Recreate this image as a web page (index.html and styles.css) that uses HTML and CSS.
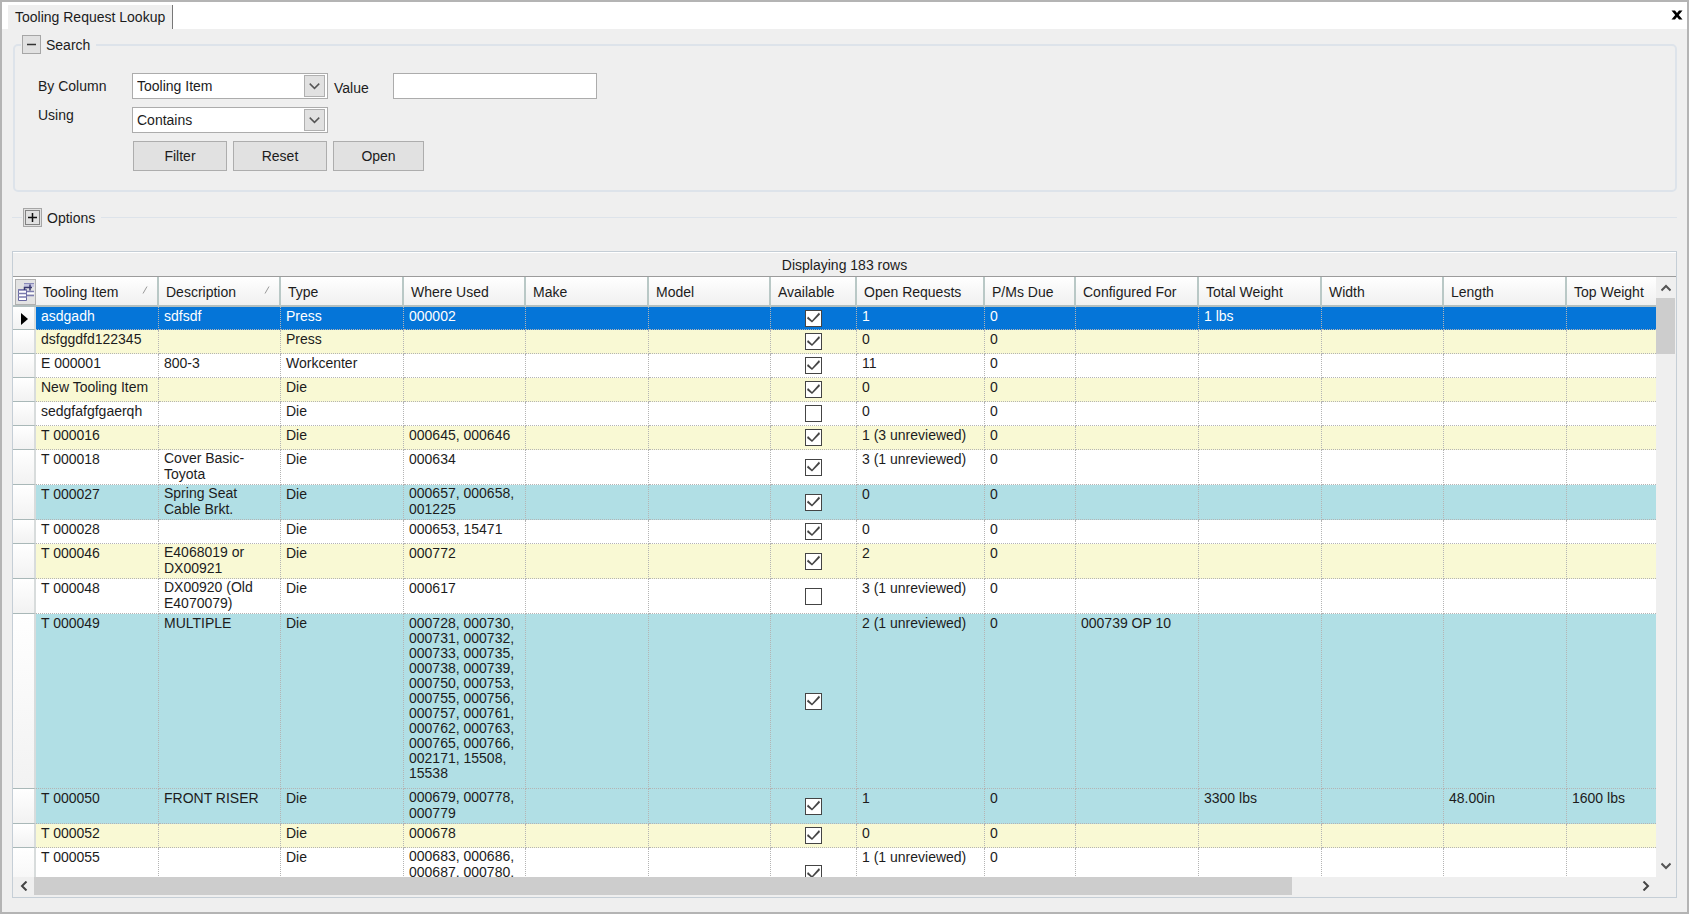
FILE: index.html
```
<!DOCTYPE html>
<html lang="en">
<head>
<meta charset="utf-8">
<title>Tooling Request Lookup</title>
<link rel="stylesheet" href="styles.css">
</head>
<body>
<main class="window">
  <header class="tabs">
    <h1 class="tab">Tooling Request Lookup</h1>
    <button class="close" type="button" aria-label="Close">
      <svg width="12" height="10" viewBox="0 0 12 10"><path d="M0.500 0.500H4L6 3L8 0.500H11.500L7.800 5L11.500 9.500H8L6 7L4 9.500H0.500L4.200 5Z" fill="#000"/></svg>
    </button>
  </header>

  <fieldset class="group">
    <legend class="legend">
      <button class="toggle" type="button" aria-label="Collapse search"><svg width="17" height="17" viewBox="0 0 17 17"><path d="M4 8.500H13" stroke="#333" stroke-width="1.500"/></svg></button>
      <span>Search</span>
    </legend>
    <form class="form">
      <label class="label" for="column">By Column</label>
      <div class="field">
        <span class="combo">
          <select id="column"><option>Tooling Item</option></select>
          <svg class="arrow" viewBox="0 0 20 20"><path d="M5 7.500L10 12.500L15 7.500" fill="none" stroke="#555" stroke-width="1.500"/></svg>
        </span>
        <label class="value-label" for="value">Value</label>
        <input class="text" id="value" type="text">
      </div>
      <label class="label second" for="using">Using</label>
      <div class="field">
        <span class="combo">
          <select id="using"><option>Contains</option></select>
          <svg class="arrow" viewBox="0 0 20 20"><path d="M5 7.500L10 12.500L15 7.500" fill="none" stroke="#555" stroke-width="1.500"/></svg>
        </span>
      </div>
      <div class="actions">
        <button class="button" type="button">Filter</button>
        <button class="button" type="button">Reset</button>
        <button class="button narrow" type="button">Open</button>
      </div>
    </form>
  </fieldset>

  <fieldset class="group collapsed">
    <legend class="legend">
      <button class="toggle" type="button" aria-label="Expand options"><svg width="17" height="17" viewBox="0 0 17 17"><rect x="1.500" y="1.500" width="14" height="14" fill="none" stroke="#222" stroke-dasharray="1 1"/><path d="M4 8.500H13M8.500 4V13" stroke="#111" stroke-width="1.500"/></svg></button>
      <span>Options</span>
    </legend>
  </fieldset>

  <section class="grid">
    <h2 class="caption">Displaying 183 rows</h2>
    <div class="viewport">
      <table class="table">
        <colgroup>
          <col class="c-head"><col class="c-wide"><col class="c-mid"><col class="c-wide"><col class="c-mid"><col class="c-wide"><col class="c-mid"><col class="c-avail"><col class="c-open"><col class="c-due"><col class="c-wide"><col class="c-wide"><col class="c-mid"><col class="c-wide"><col>
        </colgroup>
        <thead>
          <tr>
            <th class="chooser-cell"><button class="chooser" type="button" aria-label="Choose columns"><svg width="18" height="20" viewBox="0 0 18 20"><path d="M7 1H17V5H7Z" fill="#c6c6e0"/><path d="M7 1.500H17" stroke="#8a8ab8"/><path d="M9 9H17V12H9Z" fill="#fff"/><path d="M9 9.500H17M9 13.500H17" stroke="#7c7cae" stroke-width="1.500"/><path d="M1.500 7.500H9.500V18.500H1.500Z" fill="#fff" stroke="#6a6aa2"/><path d="M1 8H10M1 11.500H10M1 15H10" stroke="#7c7cae" stroke-width="1.500"/><path d="M7.500 8V5.500H15M13 2.500V8.500" fill="none" stroke="#3a3a70" stroke-width="1.500"/></svg></button></th>
            <th class="sorted">Tooling Item<svg class="sort" width="6" height="8" viewBox="0 0 6 8"><path d="M1 7.500L5 0.500" stroke="#999"/></svg></th>
            <th class="sorted">Description<svg class="sort" width="6" height="8" viewBox="0 0 6 8"><path d="M1 7.500L5 0.500" stroke="#999"/></svg></th>
            <th>Type</th><th>Where Used</th><th>Make</th><th>Model</th><th>Available</th><th>Open Requests</th><th>P/Ms Due</th><th>Configured For</th><th>Total Weight</th><th>Width</th><th>Length</th><th>Top Weight</th>
          </tr>
        </thead>
        <tbody>
          <tr class="selected"><td class="rowhead"><svg width="7" height="12" viewBox="0 0 7 12"><path d="M0 0L7 6L0 12Z" fill="#000"/></svg></td><td>asdgadh</td><td>sdfsdf</td><td>Press</td><td>000002</td><td></td><td></td><td class="check"><input type="checkbox" checked aria-label="asdgadh available"></td><td>1</td><td>0</td><td></td><td>1 lbs</td><td></td><td></td><td></td></tr>
          <tr class="yellow"><td class="rowhead"></td><td>dsfggdfd122345</td><td></td><td>Press</td><td></td><td></td><td></td><td class="check"><input type="checkbox" checked aria-label="dsfggdfd122345 available"></td><td>0</td><td>0</td><td></td><td></td><td></td><td></td><td></td></tr>
          <tr><td class="rowhead"></td><td>E 000001</td><td>800-3</td><td>Workcenter</td><td></td><td></td><td></td><td class="check"><input type="checkbox" checked aria-label="E 000001 available"></td><td>11</td><td>0</td><td></td><td></td><td></td><td></td><td></td></tr>
          <tr class="yellow"><td class="rowhead"></td><td>New Tooling Item</td><td></td><td>Die</td><td></td><td></td><td></td><td class="check"><input type="checkbox" checked aria-label="New Tooling Item available"></td><td>0</td><td>0</td><td></td><td></td><td></td><td></td><td></td></tr>
          <tr><td class="rowhead"></td><td>sedgfafgfgaerqh</td><td></td><td>Die</td><td></td><td></td><td></td><td class="check"><input type="checkbox" aria-label="sedgfafgfgaerqh available"></td><td>0</td><td>0</td><td></td><td></td><td></td><td></td><td></td></tr>
          <tr class="yellow"><td class="rowhead"></td><td>T 000016</td><td></td><td>Die</td><td>000645, 000646</td><td></td><td></td><td class="check"><input type="checkbox" checked aria-label="T 000016 available"></td><td>1 (3 unreviewed)</td><td>0</td><td></td><td></td><td></td><td></td><td></td></tr>
          <tr class="double"><td class="rowhead"></td><td>T 000018</td><td class="multi">Cover Basic-Toyota</td><td>Die</td><td>000634</td><td></td><td></td><td class="check"><input type="checkbox" checked aria-label="T 000018 available"></td><td>3 (1 unreviewed)</td><td>0</td><td></td><td></td><td></td><td></td><td></td></tr>
          <tr class="blue double"><td class="rowhead"></td><td>T 000027</td><td class="multi">Spring Seat Cable Brkt.</td><td>Die</td><td class="multi">000657, 000658, 001225</td><td></td><td></td><td class="check"><input type="checkbox" checked aria-label="T 000027 available"></td><td>0</td><td>0</td><td></td><td></td><td></td><td></td><td></td></tr>
          <tr><td class="rowhead"></td><td>T 000028</td><td></td><td>Die</td><td>000653, 15471</td><td></td><td></td><td class="check"><input type="checkbox" checked aria-label="T 000028 available"></td><td>0</td><td>0</td><td></td><td></td><td></td><td></td><td></td></tr>
          <tr class="yellow double"><td class="rowhead"></td><td>T 000046</td><td class="multi">E4068019 or DX00921</td><td>Die</td><td>000772</td><td></td><td></td><td class="check"><input type="checkbox" checked aria-label="T 000046 available"></td><td>2</td><td>0</td><td></td><td></td><td></td><td></td><td></td></tr>
          <tr class="double"><td class="rowhead"></td><td>T 000048</td><td class="multi">DX00920 (Old E4070079)</td><td>Die</td><td>000617</td><td></td><td></td><td class="check"><input type="checkbox" aria-label="T 000048 available"></td><td>3 (1 unreviewed)</td><td>0</td><td></td><td></td><td></td><td></td><td></td></tr>
          <tr class="blue tall"><td class="rowhead"></td><td>T 000049</td><td>MULTIPLE</td><td>Die</td><td class="multi">000728, 000730, 000731, 000732, 000733, 000735, 000738, 000739, 000750, 000753, 000755, 000756, 000757, 000761, 000762, 000763, 000765, 000766, 002171, 15508, 15538</td><td></td><td></td><td class="check"><input type="checkbox" checked aria-label="T 000049 available"></td><td>2 (1 unreviewed)</td><td>0</td><td>000739 OP 10</td><td></td><td></td><td></td><td></td></tr>
          <tr class="blue double"><td class="rowhead"></td><td>T 000050</td><td>FRONT RISER</td><td>Die</td><td class="multi">000679, 000778, 000779</td><td></td><td></td><td class="check"><input type="checkbox" checked aria-label="T 000050 available"></td><td>1</td><td>0</td><td></td><td>3300 lbs</td><td></td><td>48.00in</td><td>1600 lbs</td></tr>
          <tr class="yellow"><td class="rowhead"></td><td>T 000052</td><td></td><td>Die</td><td>000678</td><td></td><td></td><td class="check"><input type="checkbox" checked aria-label="T 000052 available"></td><td>0</td><td>0</td><td></td><td></td><td></td><td></td><td></td></tr>
          <tr class="triple"><td class="rowhead"></td><td>T 000055</td><td></td><td>Die</td><td class="multi">000683, 000686, 000687, 000780,</td><td></td><td></td><td class="check"><input type="checkbox" checked aria-label="T 000055 available"></td><td>1 (1 unreviewed)</td><td>0</td><td></td><td></td><td></td><td></td><td></td></tr>
        </tbody>
      </table>
    </div>
    <div class="vscroll">
      <button class="step" type="button" aria-label="Scroll up"><svg width="10" height="8" viewBox="0 0 10 8"><path d="M0.500 6.500L5 2L9.500 6.500" fill="none" stroke="#555" stroke-width="2"/></svg></button>
      <div class="track"><div class="thumb"></div></div>
      <button class="step" type="button" aria-label="Scroll down"><svg width="10" height="8" viewBox="0 0 10 8"><path d="M0.500 1.500L5 6L9.500 1.500" fill="none" stroke="#555" stroke-width="2"/></svg></button>
    </div>
    <div class="hscroll">
      <button class="step" type="button" aria-label="Scroll left"><svg width="8" height="10" viewBox="0 0 8 10"><path d="M6.500 0.500L2 5L6.500 9.500" fill="none" stroke="#444" stroke-width="2"/></svg></button>
      <div class="track"><div class="thumb"></div></div>
      <button class="step" type="button" aria-label="Scroll right"><svg width="8" height="10" viewBox="0 0 8 10"><path d="M1.500 0.500L6 5L1.500 9.500" fill="none" stroke="#444" stroke-width="2"/></svg></button>
    </div>
  </section>
</main>
</body>
</html>
```

FILE: styles.css
```
* {
  box-sizing: border-box;
}

body {
  margin: 0;
  font-family: "Liberation Sans", Arial, sans-serif;
  font-size: 14px;
  line-height: 16px;
  color: #1c1c1c;
}

button,
input,
select {
  font: inherit;
  color: inherit;
  margin: 0;
  border-radius: 0;
}

svg {
  display: block;
}

.window {
  display: flex;
  flex-direction: column;
  height: 100vh;
  background: #efefef;
  border: 2px solid #b4b4b4;
}

.tabs {
  display: flex;
  justify-content: space-between;
  align-items: flex-end;
  height: 27px;
  padding-left: 6px;
  background: #fff;
}

.tab {
  margin: 0;
  height: 24px;
  padding: 4px 7px 0;
  font-size: 14px;
  font-weight: normal;
  background: #efefef;
  border-right: 1px solid #777;
}

.close {
  align-self: center;
  padding: 0;
  margin: 0 4px 2px 0;
  background: none;
  border: 0;
}

.group {
  min-width: 0;
  margin: 6px 10px 0 11px;
  padding: 0;
  border: 2px solid #dde3ea;
  border-radius: 5px;
}

.legend {
  display: flex;
  align-items: center;
  gap: 5px;
  margin-left: 6px;
  padding: 0 6px 0 1px;
}

.toggle {
  width: 19px;
  height: 19px;
  padding: 0;
  background: #e1e1e1;
  border: 1px solid #a6a6a6;
}

.form {
  display: grid;
  grid-template-columns: 94px 1fr;
  gap: 8px 0;
  padding: 19px 0 19px 23px;
}

.label {
  padding-top: 5px;
}

.label.second {
  padding-top: 0;
}

.field {
  display: flex;
}

.combo {
  display: grid;
  width: 196px;
  height: 26px;
}

.combo select {
  grid-area: 1 / 1;
  appearance: none;
  padding: 0 28px 0 4px;
  background: #fff;
  border: 1px solid #acacac;
}

.arrow {
  grid-area: 1 / 1;
  place-self: center end;
  width: 21px;
  height: 22px;
  margin-right: 3px;
  background: #e1e1e1;
  border: 1px solid #b0b0b0;
  pointer-events: none;
}

.value-label {
  width: 65px;
  padding: 7px 0 0 6px;
}

.text {
  width: 204px;
  height: 26px;
  padding: 0 4px;
  background: #fff;
  border: 1px solid #acacac;
}

.actions {
  grid-column: 2;
  display: flex;
  gap: 6px;
  padding-left: 1px;
}

.button {
  width: 94px;
  height: 30px;
  padding: 0;
  background: #e1e1e1;
  border: 1px solid #adadad;
}

.button.narrow {
  width: 91px;
}

.collapsed {
  margin-top: 16px;
  border-width: 1px 0 0;
  border-radius: 0;
  margin-left: 10px;
}

.collapsed .legend {
  margin-left: 10px;
}

.grid {
  flex: 1;
  min-height: 0;
  display: grid;
  grid-template-columns: minmax(0, 1fr) 20px;
  grid-template-rows: 25px minmax(0, 1fr) 20px;
  margin: 24px 10px 14px;
  border: 1px solid #c5ced6;
}

.caption {
  grid-column: 1 / 3;
  margin: 0;
  padding-top: 4px;
  font-size: 14px;
  font-weight: normal;
  text-align: center;
  border-top: 1px solid #fff;
  border-bottom: 1px solid #9c9c9c;
}

.viewport {
  overflow: hidden;
  background: #fff;
}

.table {
  width: 100%;
  table-layout: fixed;
  border-collapse: separate;
  border-spacing: 0;
}

.c-head {
  width: 23px;
}

.c-wide {
  width: 123px;
}

.c-mid {
  width: 122px;
}

.c-avail {
  width: 86px;
}

.c-open {
  width: 128px;
}

.c-due {
  width: 91px;
}

th {
  height: 30px;
  padding: 2px 0 0 7px;
  font-weight: normal;
  text-align: left;
  white-space: nowrap;
  background: linear-gradient(#fff, #f0f0f0);
  border-right: 2px solid #b9c8c6;
  border-bottom: 2px solid #b3bfbf;
}

th:last-child {
  border-right: 0;
}

.sorted {
  position: relative;
}

.sort {
  position: absolute;
  top: 9px;
  right: 9px;
}

.chooser-cell {
  padding: 1px 0 0 2px;
  border-right: 0;
}

.chooser {
  display: grid;
  place-items: center;
  width: 21px;
  height: 26px;
  padding: 0;
  background: #e3e3e3;
  border: 1px solid #b0b0b0;
}

td {
  height: 24px;
  padding: 1px 4px 0 5px;
  vertical-align: top;
  border-right: 1px dotted #b4b4b4;
  border-bottom: 1px dotted #b4b4b4;
}

.double td {
  height: 35px;
}

.triple td {
  height: 52px;
}

.tall td {
  height: 175px;
}

td.multi {
  padding-top: 0;
}

.tall td.multi {
  padding-top: 2px;
  line-height: 15px;
}

td:last-child {
  border-right: 0;
}

.yellow td {
  background: #f9f9d4;
}

.blue td {
  background: #b1dfe5;
}

.selected td {
  height: 23px;
  color: #fff;
  background: #0575d8;
}

tr td.rowhead {
  padding: 2px 0 0 8px;
  vertical-align: middle;
  background: linear-gradient(#fff, #f2f2f2);
  border-right: 2px solid #d8dcdc;
  border-bottom: 1px solid #a9b8b8;
}

td.check {
  padding: 0;
  text-align: center;
  vertical-align: middle;
}

.check input {
  appearance: none;
  display: block;
  width: 17px;
  height: 17px;
  margin: 0 auto;
  background: #fff;
  border: 1px solid #444;
}

.check input:checked::before {
  content: "";
  display: block;
  width: 15px;
  height: 15px;
  background: #444;
  clip-path: polygon(1px 8px, 2px 6px, 6px 10px, 13px 2px, 14px 4px, 6px 12px);
}

.vscroll {
  grid-row: 2 / 4;
  grid-column: 2;
  display: flex;
  flex-direction: column;
  padding: 0 1px 21px 0;
}

.hscroll {
  display: flex;
  padding-bottom: 2px;
}

.track {
  display: flex;
  flex: 1;
}

.step {
  display: grid;
  flex: 0 0 21px;
  place-items: center;
  padding: 0;
  background: none;
  border: 0;
}

.thumb {
  background: #cdcdcd;
}

.vscroll .thumb {
  width: 100%;
  height: 10%;
}

.hscroll .thumb {
  width: 1258px;
  max-width: 80%;
}
```
